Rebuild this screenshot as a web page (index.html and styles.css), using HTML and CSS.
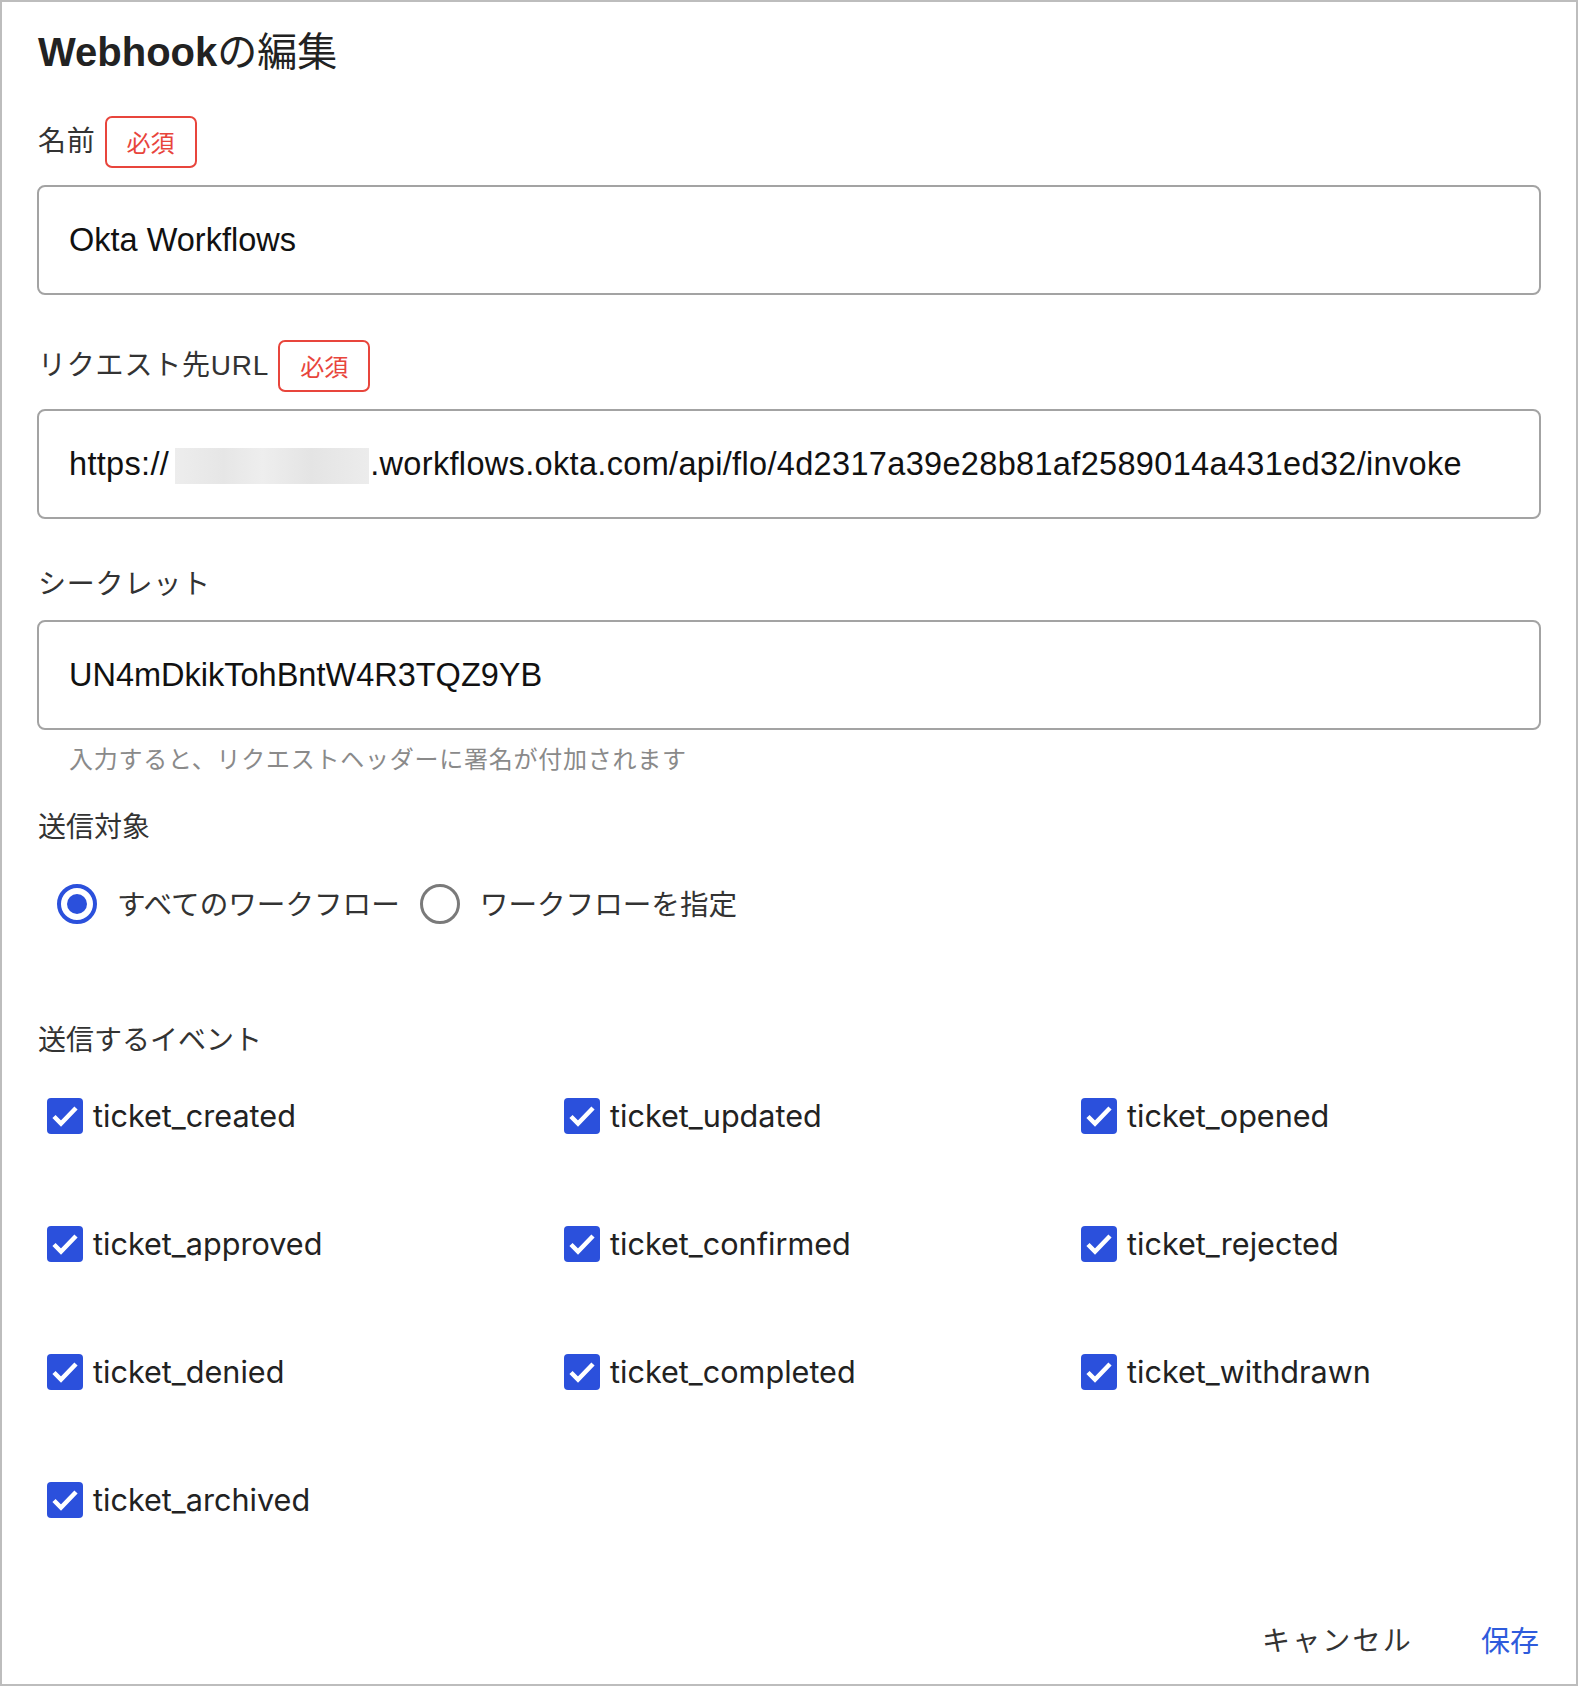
FILE: index.html
```html
<!DOCTYPE html>
<html lang="ja">
<head>
<meta charset="utf-8">
<title>Webhookの編集</title>
<link rel="stylesheet" href="styles.css">
</head>
<body>
<div class="dialog">
  <h1 class="title">Webhook<span class="title-jp">の編集</span></h1>

  <div class="field">
    <div class="label-row">
      <span class="label">名前</span>
      <span class="badge">必須</span>
    </div>
    <div class="input"><span class="input-text">Okta Workflows</span></div>
  </div>

  <div class="field">
    <div class="label-row">
      <span class="label">リクエスト先URL</span>
      <span class="badge">必須</span>
    </div>
    <div class="input"><span class="input-text url">https://<span class="blur"></span>.workflows.okta.com/api/flo/4d2317a39e28b81af2589014a431ed32/invoke</span></div>
  </div>

  <div class="field">
    <div class="label-row plain">
      <span class="label">シークレット</span>
    </div>
    <div class="input"><span class="input-text">UN4mDkikTohBntW4R3TQZ9YB</span></div>
    <p class="helper">入力すると、リクエストヘッダーに署名が付加されます</p>
  </div>

  <div class="section-label">送信対象</div>
  <div class="radios">
    <label class="radio-item"><span class="radio checked"></span><span class="radio-text">すべてのワークフロー</span></label>
    <label class="radio-item"><span class="radio"></span><span class="radio-text">ワークフローを指定</span></label>
  </div>

  <div class="section-label events-label">送信するイベント</div>
  <div class="events">
    <div class="event"><svg class="check" viewBox="0 0 36 36"><rect width="36" height="36" rx="4"/><polyline points="7,18.5 14,25.5 29,10"/></svg><span class="event-text">ticket_created</span></div>
    <div class="event"><svg class="check" viewBox="0 0 36 36"><rect width="36" height="36" rx="4"/><polyline points="7,18.5 14,25.5 29,10"/></svg><span class="event-text">ticket_updated</span></div>
    <div class="event"><svg class="check" viewBox="0 0 36 36"><rect width="36" height="36" rx="4"/><polyline points="7,18.5 14,25.5 29,10"/></svg><span class="event-text">ticket_opened</span></div>
    <div class="event"><svg class="check" viewBox="0 0 36 36"><rect width="36" height="36" rx="4"/><polyline points="7,18.5 14,25.5 29,10"/></svg><span class="event-text">ticket_approved</span></div>
    <div class="event"><svg class="check" viewBox="0 0 36 36"><rect width="36" height="36" rx="4"/><polyline points="7,18.5 14,25.5 29,10"/></svg><span class="event-text">ticket_confirmed</span></div>
    <div class="event"><svg class="check" viewBox="0 0 36 36"><rect width="36" height="36" rx="4"/><polyline points="7,18.5 14,25.5 29,10"/></svg><span class="event-text">ticket_rejected</span></div>
    <div class="event"><svg class="check" viewBox="0 0 36 36"><rect width="36" height="36" rx="4"/><polyline points="7,18.5 14,25.5 29,10"/></svg><span class="event-text">ticket_denied</span></div>
    <div class="event"><svg class="check" viewBox="0 0 36 36"><rect width="36" height="36" rx="4"/><polyline points="7,18.5 14,25.5 29,10"/></svg><span class="event-text">ticket_completed</span></div>
    <div class="event"><svg class="check" viewBox="0 0 36 36"><rect width="36" height="36" rx="4"/><polyline points="7,18.5 14,25.5 29,10"/></svg><span class="event-text">ticket_withdrawn</span></div>
    <div class="event"><svg class="check" viewBox="0 0 36 36"><rect width="36" height="36" rx="4"/><polyline points="7,18.5 14,25.5 29,10"/></svg><span class="event-text">ticket_archived</span></div>
  </div>

  <div class="actions">
    <button class="btn btn-cancel">キャンセル</button>
    <button class="btn btn-save">保存</button>
  </div>
</div>
</body>
</html>
```

FILE: styles.css
```css
html, body {
  margin: 0;
  padding: 0;
  background: #ffffff;
}

body {
  font-family: "Liberation Sans", "Noto Sans CJK JP", sans-serif;
  color: #333333;
}

.dialog {
  box-sizing: border-box;
  width: 1578px;
  height: 1686px;
  border: 2px solid #bdbdbd;
  padding: 0 35px 25px 35px;
  display: flex;
  flex-direction: column;
}

.title {
  margin: 23px 0 0 1px;
  font-family: "Liberation Sans", "Noto Sans CJK JP", sans-serif;
  font-size: 40px;
  line-height: 48px;
  font-weight: 700;
  color: #222222;
}

.title-jp {
  font-family: "Noto Sans CJK JP", sans-serif;
  font-weight: 400;
}

.field {
  display: flex;
  flex-direction: column;
}

.label-row {
  display: flex;
  align-items: center;
  gap: 9px;
  height: 52px;
  margin-top: 40px;
  margin-bottom: 17px;
}

.field + .field .label-row {
  margin-top: 45px;
}

.label-row.plain {
  height: 40px;
}

.field + .field .label-row.plain {
  margin-top: 44px;
}

.label {
  font-family: "Liberation Sans", "Noto Sans CJK JP", sans-serif;
  font-size: 28px;
  line-height: 40px;
  letter-spacing: 0.8px;
  color: #333333;
  padding-left: 1px;
  margin-top: 0;
}

.label-row.plain .label {
  margin-top: 4px;
}

.badge {
  box-sizing: border-box;
  height: 52px;
  padding: 0 20px;
  border: 2px solid #e8453c;
  border-radius: 7px;
  font-family: "Noto Sans CJK JP", sans-serif;
  font-size: 24px;
  line-height: 48px;
  color: #e8453c;
}

.input {
  box-sizing: border-box;
  height: 110px;
  border: 2px solid #a3a3a3;
  border-radius: 8px;
  padding: 0 30px;
  display: flex;
  align-items: center;
}

.input-text {
  font-family: "Liberation Sans", sans-serif;
  font-size: 32.5px;
  color: #111111;
  white-space: nowrap;
  display: flex;
  align-items: center;
}

.input-text.url {
  letter-spacing: 0.33px;
}

.blur {
  display: inline-block;
  width: 194px;
  height: 36px;
  margin: 4px 1px 0 6px;
  background: linear-gradient(90deg, #ededed 0%, #e6e6e6 25%, #eeeeee 45%, #e4e4e4 70%, #ececec 100%);
}

.helper {
  margin: 12px 0 0 32px;
  font-family: "Noto Sans CJK JP", sans-serif;
  font-size: 24px;
  line-height: 32px;
  letter-spacing: 0.75px;
  color: #8a8a8a;
}

.section-label {
  margin-top: 31px;
  margin-left: 1px;
  font-family: "Noto Sans CJK JP", sans-serif;
  font-size: 28px;
  line-height: 40px;
  color: #333333;
}

.radios {
  display: flex;
  align-items: center;
  height: 56px;
  margin-top: 31px;
  padding-left: 20px;
  gap: 20px;
}

.radio-item {
  display: flex;
  align-items: center;
  gap: 20px;
}

.radio {
  box-sizing: border-box;
  width: 40px;
  height: 40px;
  border-radius: 50%;
  border: 3.5px solid #7a7a7a;
  display: flex;
  align-items: center;
  justify-content: center;
}

.radio.checked {
  border: 4px solid #2b50dc;
}

.radio.checked::after {
  content: "";
  width: 20px;
  height: 20px;
  border-radius: 50%;
  background: #2b50dc;
}

.radio-text {
  font-family: "Noto Sans CJK JP", sans-serif;
  font-size: 28.6px;
  line-height: 40px;
  color: #333333;
  margin-top: -2px;
}

.events-label {
  margin-top: 86px;
}

.events {
  display: grid;
  grid-template-columns: 517px 517px 1fr;
  grid-auto-rows: 56px;
  row-gap: 72px;
  margin-top: 30px;
  padding-left: 10px;
}

.event {
  display: flex;
  align-items: center;
  gap: 10px;
}

.check {
  width: 36px;
  height: 36px;
  flex: none;
}

.check rect {
  fill: #2b50dc;
}

.check polyline {
  fill: none;
  stroke: #ffffff;
  stroke-width: 4.5;
  stroke-linecap: butt;
  stroke-linejoin: miter;
}

.event-text {
  font-family: "Inter", "Liberation Sans", sans-serif;
  font-size: 30.6px;
  line-height: 40px;
  color: #222222;
}

.actions {
  margin-top: auto;
  display: flex;
  justify-content: flex-end;
  align-items: center;
  gap: 68px;
  padding-right: 2px;
}

.btn {
  border: none;
  background: none;
  padding: 0;
  font-family: "Noto Sans CJK JP", sans-serif;
  font-size: 28px;
  line-height: 40px;
  cursor: pointer;
}

.btn-cancel {
  color: #333333;
  letter-spacing: 2.2px;
}

.btn-save {
  font-size: 29px;
  color: #2e5bdc;
}
```
